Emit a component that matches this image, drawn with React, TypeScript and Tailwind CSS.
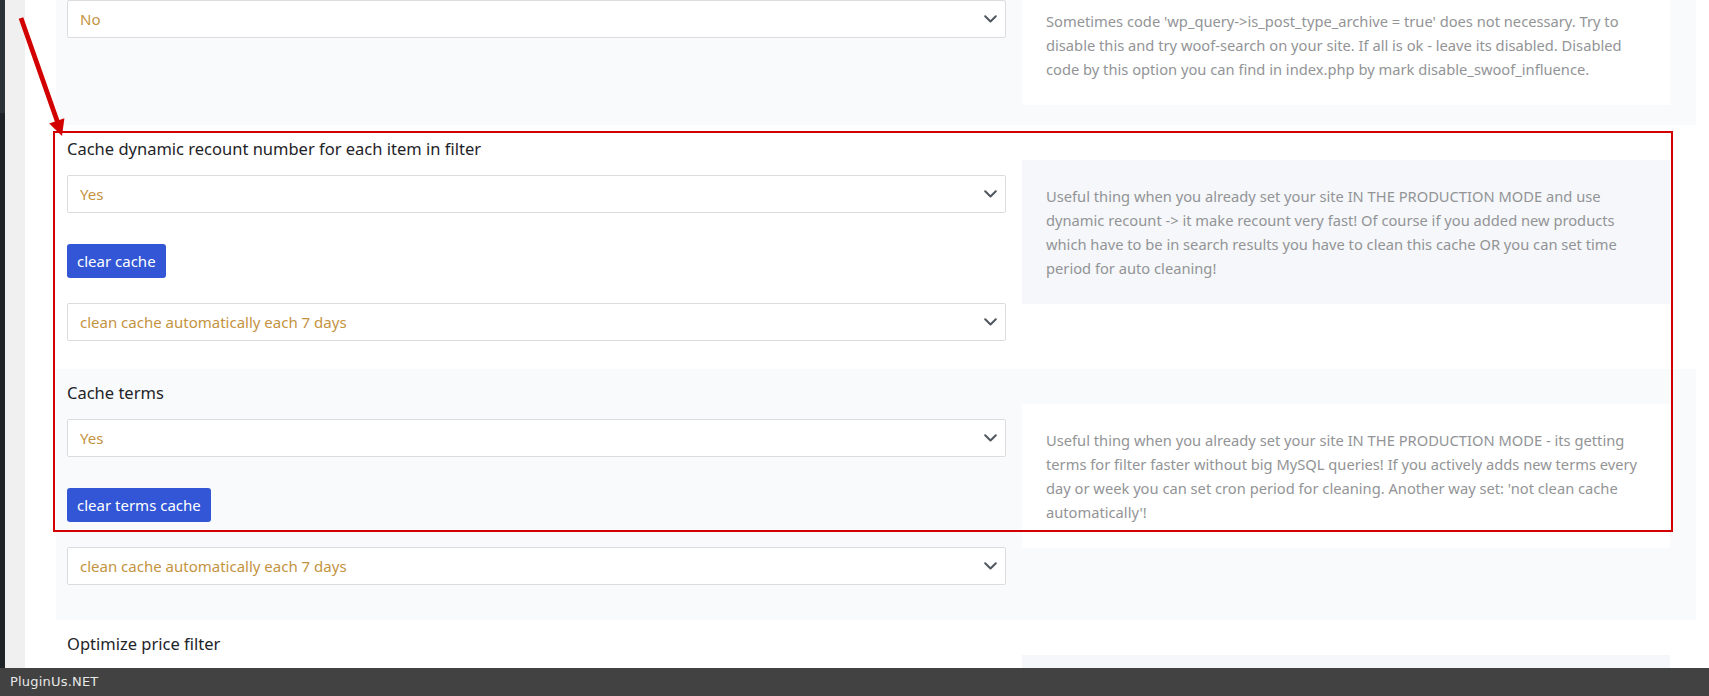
import React from "react";

function Chevron() {
  return (
    <svg width="13" height="8" viewBox="0 0 13 8" className="shrink-0">
      <path d="M1.2 1.2 6.5 6.5 11.8 1.2" fill="none" stroke="#50575e" strokeWidth="2" strokeLinecap="round" strokeLinejoin="round" />
    </svg>
  );
}

function Select({ value }: { value: string }) {
  return (
    <div className="flex h-[38px] items-center justify-between rounded-[2px] border border-[#dcdcde] bg-white pl-[12px] pr-[8px]">
      <span className="text-[15px] leading-none text-[#c4933f]">{value}</span>
      <Chevron />
    </div>
  );
}

function Button({ label }: { label: string }) {
  return (
    <div className="flex">
      <button className="h-[34px] rounded-[3px] bg-[#3256d5] px-[10px] text-[15px] leading-none text-white">{label}</button>
    </div>
  );
}

function Desc({ lines, light, minH }: { lines: string[]; light: boolean; minH?: boolean }) {
  return (
    <div
      className={
        (light ? "bg-[#f5f7fa] " : "bg-white ") +
        (minH ? "min-h-[120px] " : "") +
        "p-6 text-[14.7px] leading-6 text-[#929496]"
      }
    >
      {lines.map((l, i) => (
        <div key={i} className="whitespace-nowrap">
          {l}
        </div>
      ))}
    </div>
  );
}

function Section({
  title,
  light,
  pb,
  left,
  desc,
}: {
  title: string;
  light: boolean;
  pb: string;
  left: React.ReactNode;
  desc: string[];
}) {
  return (
    <section className={(light ? "bg-[#f9fafb] " : "bg-white ") + "w-[1640px] pl-[11px] pr-[26px] pt-[12px] " + pb}>
      <h4 className="h-[23px] text-[16.5px] leading-[23px] text-[#1e2327]">{title}</h4>
      <div className="grid grid-cols-[939px_648px] items-start gap-x-4">
        <div className="flex flex-col pt-[15px]">{left}</div>
        <Desc lines={desc} light={!light} minH={desc.length === 0} />
      </div>
    </section>
  );
}

export default function App() {
  return (
    <div className="relative flex h-[696px] w-[1709px] flex-col overflow-hidden bg-white font-['Noto_Sans',sans-serif]">
      <div className="flex min-h-0 flex-1">
        <div className="flex w-[5px] flex-col">
          <div className="h-[113px] bg-[#2c3338]" />
          <div className="flex-1 bg-[#1d2327]" />
        </div>
        <div className="w-[20px] bg-[#f0f0f1]" />
        <div className="min-w-0 flex-1 overflow-hidden bg-white pl-[31px]">
          <div className="mt-[-50px] flex flex-col">
            <Section
              title=""
              light={true}
              pb="pb-[20px]"
              left={<Select value="No" />}
              desc={[
                "Sometimes code 'wp_query->is_post_type_archive = true' does not necessary. Try to",
                "disable this and try woof-search on your site. If all is ok - leave its disabled. Disabled",
                "code by this option you can find in index.php by mark disable_swoof_influence.",
              ]}
            />
            <Section
              title="Cache dynamic recount number for each item in filter"
              light={false}
              pb="pb-[28px]"
              left={
                <>
                  <Select value="Yes" />
                  <div className="mt-[31px]">
                    <Button label="clear cache" />
                  </div>
                  <div className="mt-[25px]">
                    <Select value="clean cache automatically each 7 days" />
                  </div>
                </>
              }
              desc={[
                "Useful thing when you already set your site IN THE PRODUCTION MODE and use",
                "dynamic recount -> it make recount very fast! Of course if you added new products",
                "which have to be in search results you have to clean this cache OR you can set time",
                "period for auto cleaning!",
              ]}
            />
            <Section
              title="Cache terms"
              light={true}
              pb="pb-[35px]"
              left={
                <>
                  <Select value="Yes" />
                  <div className="mt-[31px]">
                    <Button label="clear terms cache" />
                  </div>
                  <div className="mt-[25px]">
                    <Select value="clean cache automatically each 7 days" />
                  </div>
                </>
              }
              desc={[
                "Useful thing when you already set your site IN THE PRODUCTION MODE - its getting",
                "terms for filter faster without big MySQL queries! If you actively adds new terms every",
                "day or week you can set cron period for cleaning. Another way set: 'not clean cache",
                "automatically'!",
              ]}
            />
            <Section
              title="Optimize price filter"
              light={false}
              pb="pb-[28px]"
              left={<div className="h-[38px] rounded-[2px] border border-[#dcdcde] bg-white" />}
              desc={[]}
            />
          </div>
        </div>
      </div>
      <footer className="flex h-[28px] shrink-0 items-center bg-[#424242] pl-[10px] font-['DejaVu_Sans',sans-serif] text-[13px] tracking-[0.2px] text-[#e8e8e8]">
        PluginUs.NET
      </footer>

      <div className="pointer-events-none absolute left-[53px] top-[131px] h-[401px] w-[1620px] border-2 border-[#d30000]" />
      <svg className="pointer-events-none absolute left-0 top-0" width="90" height="150" viewBox="0 0 90 150">
        <line x1="21" y1="18" x2="57.5" y2="122" stroke="#d30000" strokeWidth="4.8" />
        <polygon points="62,136 49.2,123.5 64.4,118.3" fill="#d30000" />
      </svg>
    </div>
  );
}
